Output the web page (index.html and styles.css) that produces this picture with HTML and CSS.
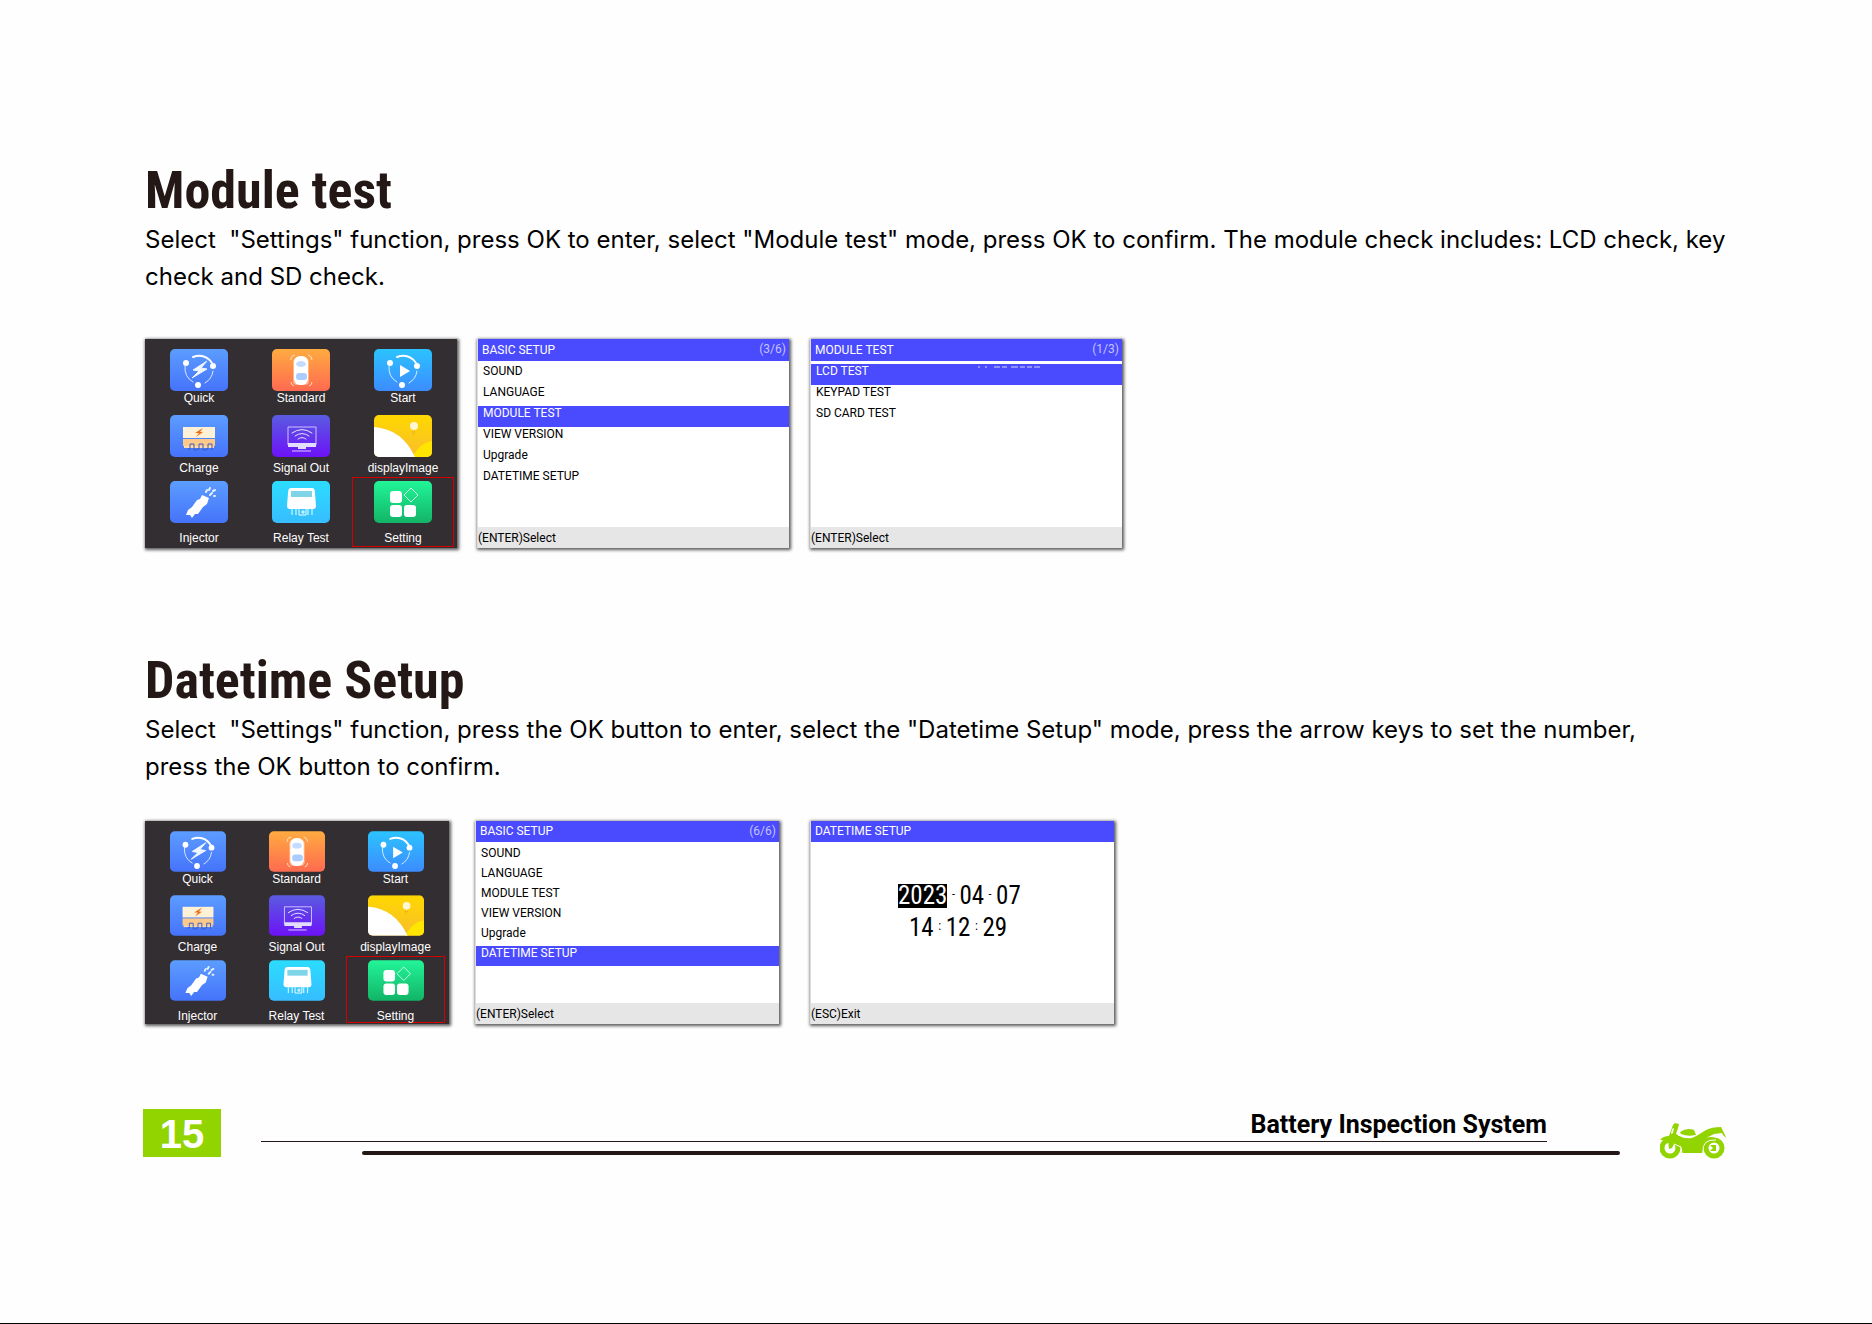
FILE: index.html
```html
<!DOCTYPE html>
<html lang="en">
<head>
<meta charset="utf-8">
<title>Battery Inspection System</title>
<link rel="stylesheet" href="styles.css">
</head>
<body>
<svg class="defs" aria-hidden="true">
  <defs>
    <linearGradient id="g-blue" x2="0" y2="1"><stop stop-color="#5c9dff"/><stop offset="1" stop-color="#4573fb"/></linearGradient>
    <linearGradient id="g-orange" x2="0" y2="1"><stop stop-color="#ffab40"/><stop offset="1" stop-color="#ff6a50"/></linearGradient>
    <linearGradient id="g-sky" x2="0" y2="1"><stop stop-color="#2cc3ff"/><stop offset="1" stop-color="#3c8cff"/></linearGradient>
    <linearGradient id="g-violet" x2="0" y2="1"><stop stop-color="#5a5ce0"/><stop offset="1" stop-color="#6d12f8"/></linearGradient>
    <linearGradient id="g-yellow" x2="0" y2="1"><stop stop-color="#ffd800"/><stop offset="1" stop-color="#f9bd2c"/></linearGradient>
    <linearGradient id="g-cyan" x2="0" y2="1"><stop stop-color="#2cdcff"/><stop offset="1" stop-color="#36bdff"/></linearGradient>
    <linearGradient id="g-green" x2="0" y2="1"><stop stop-color="#22f598"/><stop offset="1" stop-color="#12b466"/></linearGradient>
    <clipPath id="tile-clip"><rect width="58" height="42" rx="5"/></clipPath>
    <symbol id="orbit" viewBox="0 0 58 42">
      <g fill="none" stroke="#fff" stroke-linecap="round">
        <path d="M23 8Q35 4 42 14" stroke-width="2"/>
        <path d="M15 17Q14 28 23 33" opacity=".8"/>
        <path d="M43 22Q42 30 35 34" opacity=".8"/>
      </g>
      <g fill="#fff"><circle cx="16" cy="14" r="3"/><circle cx="43" cy="17" r="3"/><circle cx="28" cy="36" r="3"/></g>
    </symbol>
    <symbol id="quick" viewBox="0 0 58 42">
      <rect width="58" height="42" rx="5" fill="url(#g-blue)"/><use href="#orbit"/>
      <path d="M37 12L23 21L29 22L22 29L37 20L31 19Z" fill="#eef6ff" stroke="#eef6ff"/>
    </symbol>
    <symbol id="standard" viewBox="0 0 58 42">
      <rect width="58" height="42" rx="5" fill="url(#g-orange)"/>
      <path d="M19 11V9Q19 7 23 6M36 6Q40 7 40 11M19 33Q19 36 22 37M40 33Q40 36 37 37" fill="none" stroke="#ffe4c8"/>
      <rect x="21" y="9" width="16" height="27" rx="4" fill="#ffc9a0" opacity=".7"/>
      <rect x="22" y="7" width="14" height="29" rx="6" fill="#fff"/>
      <ellipse cx="29" cy="15" rx="5" ry="3" fill="#c4dcff"/><rect x="24" y="24" width="11" height="7" rx="3" fill="#aaccff"/>
    </symbol>
    <symbol id="start" viewBox="0 0 58 42">
      <rect width="58" height="42" rx="5" fill="url(#g-sky)"/><use href="#orbit"/>
      <path d="M26 16L36 22L26 28Z" fill="#fff"/>
    </symbol>
    <symbol id="charge" viewBox="0 0 58 42">
      <rect width="58" height="42" rx="5" fill="url(#g-blue)"/>
      <rect x="13" y="12" width="32" height="11" fill="#fff1d6"/><rect x="13" y="24" width="32" height="7" fill="#fdc98a"/>
      <path d="M14 31H44V33H14Z" fill="#fdd9ab"/>
      <path d="M18 34H20V29H24V35H27V34H29V29H33V35H36V34H38V29H42V35" fill="none" stroke="#3d5fc0"/>
      <path d="M33 13L25 18L29 18L26 22L33 17L30 17Z" fill="#f06a10"/>
    </symbol>
    <symbol id="signal" viewBox="0 0 58 42">
      <rect width="58" height="42" rx="5" fill="url(#g-violet)"/>
      <path d="M16 12H44V30H16Z" fill="none" stroke="#c9c4ff"/><path d="M16 28H44V32H16ZM26 32H34V34H26Z" fill="#e2dcff"/>
      <path d="M20 36H39" stroke="#d8ccff"/>
      <path d="M20 18Q30 11 40 18M23 21Q30 16 37 21M26 24Q30 21 34 24" fill="none" stroke="#e8e4ff" stroke-linecap="round"/>
    </symbol>
    <symbol id="image" viewBox="0 0 58 42">
      <g clip-path="url(#tile-clip)">
        <rect width="58" height="42" fill="url(#g-yellow)"/>
        <path d="M38 42Q47 27 58 26V42Z" fill="#ffe500"/><path d="M0 12Q28 14 41 42H0Z" fill="#fff"/>
        <circle cx="40" cy="11" r="4" fill="#fff6d4"/><path d="M38 17H42M39 19H41" stroke="#d79b22" stroke-dasharray="1 1"/>
      </g>
    </symbol>
    <symbol id="injector" viewBox="0 0 58 42">
      <rect width="58" height="42" rx="5" fill="url(#g-blue)"/>
      <path d="M32 14L39 17L37 23L33 26L28 33L25 33L22 37L20 34L16 34L18 29L22 26L27 19L30 18Z" fill="#fff"/>
      <path d="M36 11L37 9M40 14L42 12M39 9L40 7M43 10L45 9M44 15H45" stroke="#e6f0ff" stroke-width="2" stroke-linecap="round"/>
    </symbol>
    <symbol id="relay" viewBox="0 0 58 42">
      <rect width="58" height="42" rx="5" fill="url(#g-cyan)"/>
      <path d="M19 7H40Q43 7 43 12L44 25Q44 28 41 28H18Q15 28 15 25L16 12Q16 7 19 7Z" fill="#fff"/>
      <rect x="19" y="10" width="21" height="6" fill="#7fd4e8"/>
      <path d="M20 28V34M24 28V34M36 28V34M40 28V34M27 28V34H34V28M30 30H32V32H30Z" fill="none" stroke="#f2fdff"/>
    </symbol>
    <symbol id="setting" viewBox="0 0 58 42">
      <rect width="58" height="42" rx="5" fill="url(#g-green)"/>
      <g fill="#fff"><rect x="16" y="10" width="12" height="12" rx="3"/><rect x="16" y="24" width="12" height="12" rx="3"/><rect x="30" y="24" width="12" height="12" rx="3"/></g>
      <path d="M37 7L44 14L37 21L30 14Z" fill="none" stroke="#c9ffe4" stroke-linejoin="round"/>
    </symbol>
  </defs>
</svg>

<main class="page">
  <section class="topic">
    <h1 class="topic-title">Module test</h1>
    <p class="topic-text">Select&nbsp; "Settings" function, press OK to enter, select "Module test" mode, press OK to confirm. The module check includes: LCD check, key<br>check and SD check.</p>
    <div class="screens">
      <div class="screen home">
        <button class="tile"><svg class="tile-icon"><use href="#quick"/></svg>Quick</button>
        <button class="tile"><svg class="tile-icon"><use href="#standard"/></svg>Standard</button>
        <button class="tile"><svg class="tile-icon"><use href="#start"/></svg>Start</button>
        <button class="tile mid"><svg class="tile-icon"><use href="#charge"/></svg>Charge</button>
        <button class="tile mid"><svg class="tile-icon"><use href="#signal"/></svg>Signal Out</button>
        <button class="tile mid"><svg class="tile-icon"><use href="#image"/></svg>displayImage</button>
        <button class="tile low"><svg class="tile-icon"><use href="#injector"/></svg>Injector</button>
        <button class="tile low"><svg class="tile-icon"><use href="#relay"/></svg>Relay Test</button>
        <button class="tile low marked"><svg class="tile-icon"><use href="#setting"/></svg>Setting</button>
      </div>
      <div class="screen menu">
        <div class="bar"><span>BASIC SETUP</span><span class="count">(3/6)</span></div>
        <ul class="items">
          <li>SOUND</li><li>LANGUAGE</li><li class="active">MODULE TEST</li><li>VIEW VERSION</li><li>Upgrade</li><li>DATETIME SETUP</li>
        </ul>
        <div class="hint">(ENTER)Select</div>
      </div>
      <div class="screen menu">
        <div class="bar"><span>MODULE TEST</span><span class="count">(1/3)</span></div>
        <ul class="items">
          <li class="active">LCD TEST<svg class="residue" viewBox="0 0 64 3"><path d="M1 1H3M8 1H10M17 1H23M25 1H30M34 1H41M43 1H48M50 1H55M57 1H63" stroke="#d5d5ff"/></svg></li><li>KEYPAD TEST</li><li>SD CARD TEST</li>
        </ul>
        <div class="hint">(ENTER)Select</div>
      </div>
    </div>
  </section>

  <section class="topic compact">
    <h1 class="topic-title">Datetime Setup</h1>
    <p class="topic-text">Select&nbsp; "Settings" function, press the OK button to enter, select the "Datetime Setup" mode, press the arrow keys to set the number,<br>press the OK button to confirm.</p>
    <div class="screens">
      <div class="screen home">
        <button class="tile"><svg class="tile-icon"><use href="#quick"/></svg>Quick</button>
        <button class="tile"><svg class="tile-icon"><use href="#standard"/></svg>Standard</button>
        <button class="tile"><svg class="tile-icon"><use href="#start"/></svg>Start</button>
        <button class="tile mid"><svg class="tile-icon"><use href="#charge"/></svg>Charge</button>
        <button class="tile mid"><svg class="tile-icon"><use href="#signal"/></svg>Signal Out</button>
        <button class="tile mid"><svg class="tile-icon"><use href="#image"/></svg>displayImage</button>
        <button class="tile low"><svg class="tile-icon"><use href="#injector"/></svg>Injector</button>
        <button class="tile low"><svg class="tile-icon"><use href="#relay"/></svg>Relay Test</button>
        <button class="tile low marked"><svg class="tile-icon"><use href="#setting"/></svg>Setting</button>
      </div>
      <div class="screen menu">
        <div class="bar"><span>BASIC SETUP</span><span class="count">(6/6)</span></div>
        <ul class="items">
          <li>SOUND</li><li>LANGUAGE</li><li>MODULE TEST</li><li>VIEW VERSION</li><li>Upgrade</li><li class="active">DATETIME SETUP</li>
        </ul>
        <div class="hint">(ENTER)Select</div>
      </div>
      <div class="screen menu">
        <div class="bar"><span>DATETIME SETUP</span></div>
        <div class="clock">
          <div class="clock-row"><span class="picked">2023</span><i>-</i><span>04</span><i>-</i><span>07</span></div>
          <div class="clock-row time"><span>14</span><i>:</i><span>12</span><i>:</i><span>29</span></div>
        </div>
        <div class="hint">(ESC)Exit</div>
      </div>
    </div>
  </section>

  <footer class="footer">
    <span class="page-number">15</span>
    <div class="rules">
      <div class="brand">Battery Inspection System</div>
      <div class="thick"></div>
    </div>
    <svg class="moto" viewBox="0 0 66 36" role="img" aria-label="Motorcycle">
      <g fill="none" stroke="#92d400" stroke-width="5"><circle cx="10" cy="25" r="8"/><circle cx="54" cy="25" r="8"/></g>
      <g fill="#92d400">
        <path d="M9 13L13 2L15 0L19 1L18 5L16 11L20 13Q24 16 32 15L38 12L46 7Q52 4 61 4L62 6L65 12L66 15L63 12L62 10L54 11L46 15Q51 13 55 15L48 17Q44 22 43 28L42 30H22L20 22L16 17L12 25L9 26L8 17L0 17Q3 13 9 13Z"/>
        <path d="M20 9Q27 4 34 7L36 12Q28 14 21 11Z"/><path d="M50 22H56V28H50L53 25Z"/>
      </g>
      <path d="M11 11L12 6L14 5L13 10Z" fill="#fff"/>
      <g stroke="#fff" fill="none"><path d="M18 12L24 14L31 14L37 12"/><path d="M43 29Q42 16 56 17"/><path d="M14 21L21 24L22 30"/></g>
    </svg>
  </footer>
</main>
</body>
</html>
```
FILE: styles.css
```css
* { box-sizing: border-box; }
body {
  margin: 0;
  min-height: 100vh;
  background: #fefefe;
  border-bottom: 1px solid #000;
  color: #000;
  font-family: "Roboto", sans-serif;
}
.defs { position: absolute; width: 0; height: 0; }
.page { padding: 161px 146px 0 143px; }

.topic { padding-left: 2px; margin-bottom: 103px; }
.topic.compact { margin-bottom: 85px; }
.topic-title {
  margin: 0;
  color: #231815;
  font: 700 52px/60px "Roboto Condensed", "Roboto", sans-serif;
}
.topic-text {
  margin: 0 0 44px;
  font: 400 24px/37px "Inter", sans-serif;
  white-space: nowrap;
}
.compact .topic-text { margin-bottom: 36px; }
.screens {
  display: grid;
  grid-template-columns: 332px 333px 333px;
  align-items: start;
}
.compact .screens { grid-template-columns: 330px 335px 335px; }
.screen {
  width: 312px;
  height: 209px;
  background: #fff;
  box-shadow: 1px 1px 3px 1px rgba(0, 0, 0, .65);
  font-size: 12px;
}
.home {
  display: grid;
  grid-template: 66px 66px 70px / repeat(3, 102px);
  padding: 6px 0 0 3px;
  background: #332e31;
}
.tile {
  display: flex;
  flex-direction: column;
  align-items: center;
  padding: 3px 0 0;
  border: 1px solid transparent;
  background: none;
  color: #fff;
  font: 400 12px/14px "Liberation Sans", sans-serif;
}
.tile.mid { gap: 4px; }
.tile.low { gap: 8px; }
.tile.marked { border-color: #d40000; }
.tile-icon { flex: none; width: 58px; height: 42px; }

.menu { display: flex; flex-direction: column; border-left: 1px solid #ddd; }
.bar {
  display: flex;
  justify-content: space-between;
  padding: 0 3px 0 4px;
  background: #4a4aff;
  color: #fff;
  line-height: 22px;
}
.count { color: #c4c4ff; line-height: 20px; }
.items { flex: 1; margin: 0; padding: 3px 0 0; list-style: none; }
.items li { position: relative; height: 21px; padding-left: 5px; line-height: 15px; }
.items .active { background: #4a4aff; color: #fff; }
.residue { position: absolute; left: 166px; top: 2px; width: 64px; height: 3px; }
.hint { height: 21px; background: #e6e6e6; line-height: 23px; }

.compact .screen { width: 304px; height: 203px; }
.compact .home { grid-template: 64px 65px 67px / repeat(3, 99px); }
.compact .tile-icon { width: 56px; height: 41px; }
.compact .bar { line-height: 21px; }
.compact .items li { height: 20px; }
.compact .items { padding-top: 4px; }

.clock { flex: 1; padding-top: 42px; font: 400 25px/24px "Roboto Condensed", "Roboto", sans-serif; }
.clock-row { display: flex; gap: 3px; margin: 0 0 8px 87px; }
.clock-row.time { margin-left: 98px; }
.clock i { width: 6px; font-style: normal; font-size: 12px; line-height: 20px; text-align: center; }
.picked { background: #000; color: #fff; }

.footer { display: flex; align-items: flex-start; }
.page-number {
  width: 78px;
  height: 48px;
  background: #92d400;
  color: #fff;
  font: 700 40px/50px "Liberation Sans", sans-serif;
  text-align: center;
}
.rules { flex: 1; margin: 0 40px; }
.brand {
  margin-right: 73px;
  border-bottom: 1px solid #231815;
  font: 700 25px/32px "Roboto", sans-serif;
  text-align: right;
}
.thick { height: 4px; margin: 9px 0 0 101px; border-radius: 2px; background: #231815; }
.moto { width: 66px; height: 36px; margin-top: 14px; }
```
